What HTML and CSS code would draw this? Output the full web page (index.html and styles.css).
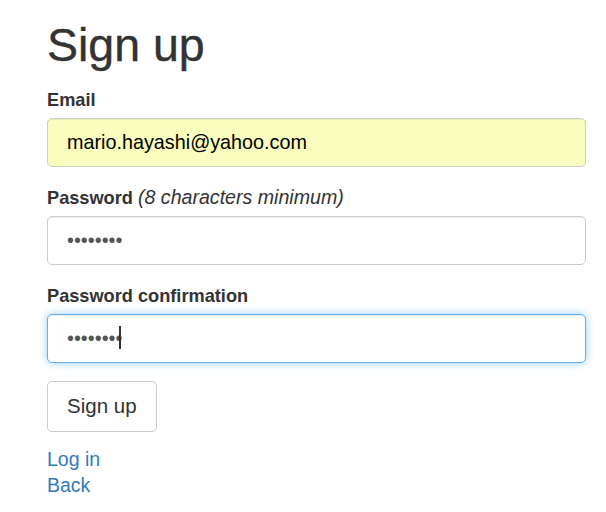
FILE: index.html
```html
<!DOCTYPE html>
<html lang="en">
<head>
<meta charset="utf-8">
<title>Sign up</title>
<link rel="stylesheet" href="styles.css">
</head>
<body>
<main class="container">
  <h1 class="title">Sign up</h1>
  <form class="form" action="#" onsubmit="return false">
    <div class="field">
      <label class="label" for="email">Email</label>
      <input class="input input-autofill" id="email" type="email" value="mario.hayashi@yahoo.com">
    </div>
    <div class="field">
      <label class="label" for="password">Password <em class="hint">(8 characters minimum)</em></label>
      <input class="input" id="password" type="password" value="12345678">
    </div>
    <div class="field">
      <label class="label" for="password_confirmation">Password confirmation</label>
      <div class="input-wrap">
        <input class="input input-focus" id="password_confirmation" type="password" value="12345678">
        <span class="caret"></span>
      </div>
    </div>
    <div class="actions">
      <button class="btn" type="submit">Sign up</button>
    </div>
  </form>
  <nav class="links">
    <a class="link" href="#">Log in</a>
    <a class="link" href="#">Back</a>
  </nav>
</main>
</body>
</html>
```
FILE: styles.css
```css
* { box-sizing: border-box; }
html, body { margin: 0; padding: 0; background: #fff; }
body {
  font-family: "Liberation Sans", Arial, sans-serif;
  color: #333;
  font-size: 19.5px;
  line-height: 26px;
}
.container {
  width: 586px;
  padding: 20px 0 0 47px;
}
.title {
  margin: 0 0 16px;
  font-size: 46.5px;
  line-height: 50.6px;
  font-weight: normal;
  color: #333;
  -webkit-text-stroke: 0.4px #333;
}
.form { margin: 0; }
.field { margin-bottom: 18px; }
.label {
  display: block;
  height: 26px;
  margin-bottom: 5px;
  font-size: 18.2px;
  line-height: 26px;
  font-weight: bold;
  color: #333;
}
.hint { font-weight: normal; font-style: italic; font-size: 19.6px; line-height: 1; }
.input {
  display: block;
  width: 539px;
  height: 49px;
  padding: 0 19px;
  border: 1.5px solid #ccc;
  border-radius: 5px;
  background: #fff;
  font-family: "Liberation Sans", Arial, sans-serif;
  font-size: 19.8px;
  color: #000;
  outline: none;
  caret-color: transparent;
  box-shadow: inset 0 1px 1px rgba(0,0,0,.075);
}
.input[type="password"] { color: #555; }
.input-autofill { background: #f9fdbd; }
.input-focus {
  border: 1.8px solid #66afe9;
  box-shadow: inset 0 1px 1px rgba(0,0,0,.075), 0 0 9px rgba(102,175,233,.65);
}
.input-wrap { position: relative; width: 539px; }
.caret {
  position: absolute;
  left: 72px;
  top: 12px;
  width: 2px;
  height: 23px;
  background: #333;
}
.actions { margin: 0; }
.btn {
  display: inline-block;
  height: 51px;
  padding: 0 19px;
  border: 1.5px solid #ccc;
  border-radius: 5px;
  background: #fff;
  font-family: "Liberation Sans", Arial, sans-serif;
  font-size: 20.5px;
  line-height: 48px;
  color: #333;
  cursor: pointer;
}
.links {
  display: flex;
  flex-direction: column;
  align-items: flex-start;
  margin-top: 14px;
}
.link {
  color: #337ab7;
  text-decoration: none;
  font-size: 19.5px;
  line-height: 26px;
}
```
